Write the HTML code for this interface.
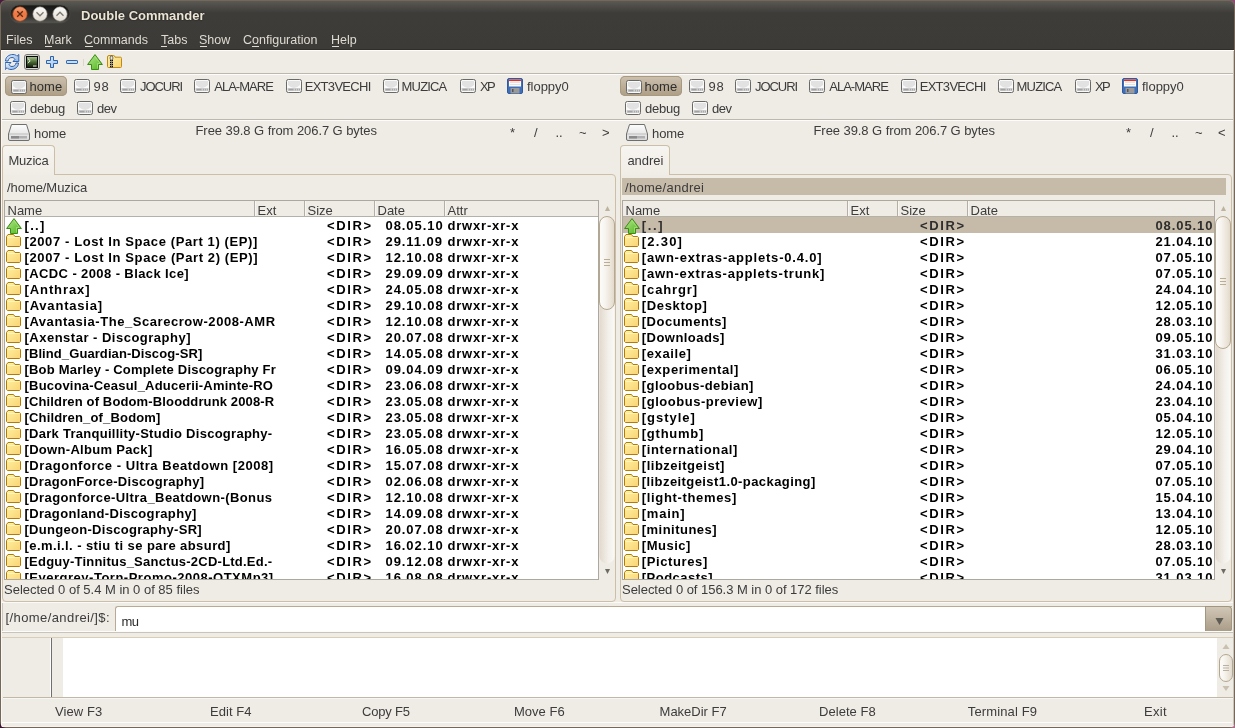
<!DOCTYPE html><html><head><meta charset="utf-8"><style>
html,body{margin:0;padding:0;}
body{width:1235px;height:728px;overflow:hidden;position:relative;background:#5b2b52;font-family:"Liberation Sans",sans-serif;color:#3C3C3C;}
.r{position:absolute;}
.t{position:absolute;white-space:pre;line-height:normal;}
.b{font-weight:bold;font-size:13px;letter-spacing:0.55px;}
</style></head><body>
<svg width="0" height="0" style="position:absolute">
<defs>
<linearGradient id="gDrive" x1="0" y1="0" x2="0" y2="1"><stop offset="0" stop-color="#fdfdfd"/><stop offset="1" stop-color="#d9d9d9"/></linearGradient>
<linearGradient id="gFold" x1="0" y1="0" x2="1" y2="1"><stop offset="0" stop-color="#fff0a2"/><stop offset="1" stop-color="#f9d474"/></linearGradient>
<linearGradient id="gArr" x1="0" y1="0" x2="1" y2="1"><stop offset="0" stop-color="#b6e896"/><stop offset="1" stop-color="#4cb414"/></linearGradient>
<linearGradient id="gTerm" x1="0" y1="0" x2="0" y2="1"><stop offset="0" stop-color="#a2c088"/><stop offset="0.5" stop-color="#4a6a34"/><stop offset="1" stop-color="#14200c"/></linearGradient>
<linearGradient id="gClose" x1="0" y1="0" x2="0" y2="1"><stop offset="0" stop-color="#f4a27a"/><stop offset="0.5" stop-color="#ee7640"/><stop offset="1" stop-color="#f0885a"/></linearGradient>
<linearGradient id="gThumb" x1="0" y1="0" x2="1" y2="0"><stop offset="0" stop-color="#fdfcfa"/><stop offset="0.35" stop-color="#f8f5f0"/><stop offset="1" stop-color="#e2d9cb"/></linearGradient>
<linearGradient id="gTrough" x1="0" y1="0" x2="1" y2="0"><stop offset="0" stop-color="#e2d9cc"/><stop offset="0.6" stop-color="#f3f0eb"/><stop offset="1" stop-color="#faf9f6"/></linearGradient>
<linearGradient id="gWb" x1="0" y1="0" x2="0" y2="1"><stop offset="0" stop-color="#fdfcfa"/><stop offset="1" stop-color="#e2dbd0"/></linearGradient>
<symbol id="drive" viewBox="0 0 16 14">
 <rect x="0.5" y="0.5" width="15" height="13" rx="1.8" fill="#fafafa" stroke="#696965"/>
 <path d="M2 2 H14 V6 Q11 9 8 9 Q5 9 2 6 Z" fill="#e2e2e2"/>
 <rect x="1.5" y="9" width="13" height="3" fill="#cfcfcf"/>
 <rect x="2.5" y="9.8" width="5" height="1.6" fill="#a2a2a2"/>
 <rect x="9" y="9.8" width="1" height="1.6" fill="#a8a8a8"/><rect x="11" y="9.8" width="1" height="1.6" fill="#a8a8a8"/><rect x="13" y="9.8" width="1" height="1.6" fill="#a8a8a8"/>
</symbol>
<symbol id="bigdrive" viewBox="0 0 22 17">
 <path d="M3.5 0.5 H18.5 L21.5 10 V15 Q21.5 16.5 20 16.5 H2 Q0.5 16.5 0.5 15 V10 Z" fill="url(#gDrive)" stroke="#6e6e6e"/>
 <path d="M1 10 H21" stroke="#bdbdbd" stroke-width="1"/>
 <rect x="3" y="12" width="16" height="2.5" fill="#b0b0b0"/>
 <rect x="3" y="12" width="8" height="2.5" fill="#8a8a8a"/>
</symbol>
<symbol id="floppy" viewBox="0 0 16 16">
 <rect x="0.5" y="0.5" width="15" height="15" rx="1.5" fill="#3f6fb8" stroke="#2f5aa0"/>
 <rect x="2" y="1.5" width="12" height="7" fill="#ffffff"/>
 <rect x="2" y="1.5" width="12" height="1.6" fill="#e0301e"/>
 <rect x="3" y="4.5" width="10" height="0.6" fill="#c8c8c8"/>
 <rect x="3" y="6.5" width="10" height="0.6" fill="#c8c8c8"/>
 <rect x="3.5" y="10" width="9" height="5.5" fill="#9a9a9a"/>
 <rect x="5" y="11" width="1.5" height="3" fill="#555"/>
</symbol>
<symbol id="folder" viewBox="0 0 15 13">
 <path d="M0.5 2.5 L2 0.5 H7.5 L9 2.5 H13.5 L14.5 3.5 V11.5 L13.5 12.5 H1.5 L0.5 11.5 Z" fill="url(#gFold)" stroke="#b37a06" stroke-linejoin="bevel"/>
 <path d="M1.5 3.5 H13.5" stroke="#fff9c8" stroke-width="1" opacity="0.8"/>
 <path d="M2.5 1.5 H7" stroke="#fffbb0" stroke-width="1" opacity="0.8"/>
</symbol>
<symbol id="uparr" viewBox="0 0 16 16">
 <path d="M8 0.6 L15.4 10.5 H11.5 V15.5 H4.5 V10.5 H0.6 Z" fill="url(#gArr)" stroke="#3b8c12" stroke-linejoin="round"/>
 <path d="M8 2.6 L13.2 9.5 H10.5 V14.5" fill="none" stroke="#c8f0a8" stroke-width="0.7" opacity="0.7"/>
</symbol>
</defs></svg><div id="w" style="position:absolute;left:0;top:0;width:1235px;height:728px;will-change:transform"><div class="r" style="left:0px;top:0px;width:8px;height:8px;background:#4a1a40;"></div>
<div class="r" style="left:1227px;top:0px;width:8px;height:8px;background:#8a4a72;"></div>
<div class="r" style="left:0px;top:720px;width:8px;height:8px;background:#3a1530;"></div>
<div class="r" style="left:1227px;top:720px;width:8px;height:8px;background:#a87088;"></div>
<div class="r" style="left:0px;top:0px;width:1235px;height:728px;background:#75685a;border-radius:6px 6px 6px 6px;"></div>
<div class="r" style="left:1px;top:1px;width:1233px;height:49px;background:linear-gradient(#5a5954,#3d3c38 12px,#3c3b37);border-radius:5px 5px 0 0;"></div>
<div class="r" style="left:1px;top:50px;width:1233px;height:677px;background:#EFEBE5;border-radius:0 0 2px 2px;"></div>
<div class="r" style="left:1px;top:49px;width:1233px;height:1px;background:#2f2e2b;"></div>
<div class="r" style="left:1px;top:50px;width:1233px;height:1px;background:#fdfcfa;"></div>
<div class="r" style="left:1px;top:51px;width:1px;height:674px;background:#faf8f4;"></div>
<div class="r" style="left:1233px;top:51px;width:1px;height:674px;background:#c9c5bd;"></div>
<svg class="r" style="left:9px;top:4px" width="62" height="20">
<defs><linearGradient id="gPill" x1="0" y1="0" x2="0" y2="1"><stop offset="0" stop-color="#161615"/><stop offset="0.6" stop-color="#2c2b28"/><stop offset="1" stop-color="#5a5954"/></linearGradient></defs><rect x="1" y="1" width="60" height="18" rx="9" fill="url(#gPill)" stroke="#4a4945" stroke-width="0.8"/>
<circle cx="11" cy="10" r="7.2" fill="url(#gClose)" stroke="#a84a20" stroke-width="0.6"/>
<path d="M8.2 7.2 L13.8 12.8 M13.8 7.2 L8.2 12.8" stroke="#5a2a14" stroke-width="1.3"/>
<circle cx="31" cy="10" r="7.2" fill="url(#gWb)" stroke="#8d8a84" stroke-width="0.6"/>
<path d="M27.5 8.3 L31 11.8 L34.5 8.3" fill="none" stroke="#7a7771" stroke-width="1.3"/>
<circle cx="51" cy="10" r="7.2" fill="url(#gWb)" stroke="#8d8a84" stroke-width="0.6"/>
<path d="M47.5 11.7 L51 8.2 L54.5 11.7" fill="none" stroke="#7a7771" stroke-width="1.3"/>
</svg>
<div class="t" style="top:8.23px;font-size:13px;font-weight:bold;color:#ECE5D5;left:81px;text-shadow:0 0 1.5px #1a1a18,0 0 1px #1a1a18;">Double Commander</div>
<div class="t" style="top:32.69px;font-size:12.5px;color:#DFDBD2;left:6px;">Files</div>
<div class="t" style="top:32.69px;font-size:12.5px;color:#DFDBD2;left:44px;">Mark</div>
<div class="r" style="left:44.5px;top:46px;width:7.5px;height:1px;background:#DFDBD2;"></div>
<div class="t" style="top:32.69px;font-size:12.5px;color:#DFDBD2;left:84px;">Commands</div>
<div class="r" style="left:85px;top:46px;width:8px;height:1px;background:#DFDBD2;"></div>
<div class="t" style="top:32.69px;font-size:12.5px;color:#DFDBD2;left:161px;">Tabs</div>
<div class="r" style="left:161px;top:46px;width:6px;height:1px;background:#DFDBD2;"></div>
<div class="t" style="top:32.69px;font-size:12.5px;color:#DFDBD2;left:199px;">Show</div>
<div class="r" style="left:200px;top:46px;width:7px;height:1px;background:#DFDBD2;"></div>
<div class="t" style="top:32.69px;font-size:12.5px;color:#DFDBD2;left:243px;">Configuration</div>
<div class="r" style="left:252px;top:46px;width:7px;height:1px;background:#DFDBD2;"></div>
<div class="t" style="top:32.69px;font-size:12.5px;color:#DFDBD2;left:331px;">Help</div>
<div class="r" style="left:332px;top:46px;width:7px;height:1px;background:#DFDBD2;"></div>
<svg class="r" style="left:5px;top:54px" width="15" height="16" viewBox="0 0 15 16">
<defs><linearGradient id="gRef" x1="0" y1="0" x2="1" y2="1"><stop offset="0" stop-color="#e8f1fb"/><stop offset="1" stop-color="#8db2e0"/></linearGradient></defs>
<path d="M0.5 7 C0.5 3 4 0.5 8 0.5 C10 0.5 11.5 1.5 12 2.2 L13.8 0.5 V7.5 H8 L10 5.3 C9.3 4.3 8.5 3.5 7 3.5 C4.5 3.5 3.5 5 3 7 Z" fill="url(#gRef)" stroke="#2a62b5" stroke-width="1"/>
<path d="M13.5 9 C13.5 13 10 15.5 6 15.5 C4 15.5 2.5 14.5 2 13.8 L0.2 15.5 V8.5 H6 L4 10.7 C4.7 11.7 5.5 12.5 7 12.5 C9.5 12.5 10.5 11 11 9 Z" fill="url(#gRef)" stroke="#2a62b5" stroke-width="1"/>
</svg>
<svg class="r" style="left:24px;top:54px" width="16" height="16" viewBox="0 0 16 16">
<rect x="0.5" y="0.5" width="15" height="15" rx="2.5" fill="#d6d6d2" stroke="#777773"/>
<rect x="2" y="2" width="12" height="12" fill="#060606"/>
<rect x="3" y="3" width="10" height="10" fill="url(#gTerm)"/>
<path d="M3.8 4.5 L6.2 6.7 L3.8 9" fill="none" stroke="#f0f4ea" stroke-width="1"/>
<rect x="9" y="11.5" width="3.5" height="1" fill="#f0f4ea"/>
</svg>
<svg class="r" style="left:46px;top:56px" width="12" height="12" viewBox="0 0 12 12">
<defs><linearGradient id="gPl" x1="0" y1="0" x2="1" y2="1"><stop offset="0" stop-color="#e0ecfa"/><stop offset="1" stop-color="#9fc0e8"/></linearGradient></defs>
<path d="M4.5 0.5 H7.5 V4.5 H11.5 V7.5 H7.5 V11.5 H4.5 V7.5 H0.5 V4.5 H4.5 Z" fill="url(#gPl)" stroke="#2d62ad" stroke-width="1" stroke-linejoin="round"/>
</svg>
<svg class="r" style="left:66px;top:60px" width="12" height="4" viewBox="0 0 12 4">
<rect x="0.5" y="0.5" width="11" height="3" rx="0.6" fill="#c9dcf3" stroke="#2d62ad" stroke-width="1"/>
</svg>
<div class="r" style="left:83px;top:59px;width:1px;height:7px;background:#dcd6cc;"></div>
<svg class="r" style="left:87px;top:54px" width="16" height="16"><use href="#uparr"/></svg>
<svg class="r" style="left:107px;top:55px" width="15" height="13" viewBox="0 0 15 13">
<path d="M0.5 2 Q0.5 0.5 2 0.5 H6.5 Q7.8 0.5 8 2.2 H13.5 Q14.5 2.2 14.5 3.5 V11.5 Q14.5 12.5 13.5 12.5 H1.5 Q0.5 12.5 0.5 11.5 Z" fill="url(#gFold)" stroke="#c08a10"/>
<rect x="3" y="5" width="3" height="1.3" fill="#0a0a0a"/><rect x="3" y="7" width="3" height="1.3" fill="#0a0a0a"/><rect x="3" y="9" width="3" height="1.3" fill="#0a0a0a"/><rect x="3" y="11" width="3" height="1.3" fill="#0a0a0a"/>
<rect x="4.1" y="4" width="0.8" height="8" fill="#999"/>
<rect x="3.2" y="1" width="2.6" height="4" rx="1.2" fill="#e8e8e8" stroke="#333" stroke-width="0.7"/>
</svg>
<div class="r" style="left:2px;top:73px;width:1231px;height:1px;background:#bcb8b0;"></div>
<div class="r" style="left:2px;top:74px;width:1231px;height:1px;background:#fdfcfa;"></div>
<div class="r" style="left:5px;top:76px;width:62px;height:20px;background:linear-gradient(#cdc1b0,#b9ab95 60%,#ad9e86);border-radius:5px;box-shadow:inset 0 0 0 1px #a8997f;"></div>
<svg class="r" style="left:11px;top:80px" width="16" height="14"><use href="#drive"/></svg>
<div class="t" style="top:79.23px;font-size:13px;color:#2e2e2e;letter-spacing:0.070px;left:29.50px;">home</div>
<svg class="r" style="left:74px;top:79px" width="16" height="14"><use href="#drive"/></svg>
<div class="t" style="top:79.23px;font-size:13px;letter-spacing:0.770px;left:93.50px;">98</div>
<svg class="r" style="left:120px;top:79px" width="16" height="14"><use href="#drive"/></svg>
<div class="t" style="top:79.23px;font-size:13px;letter-spacing:-1.055px;left:140.00px;">JOCURI</div>
<svg class="r" style="left:194px;top:79px" width="16" height="14"><use href="#drive"/></svg>
<div class="t" style="top:79.23px;font-size:13px;letter-spacing:-0.970px;left:214.20px;">ALA-MARE</div>
<svg class="r" style="left:286px;top:79px" width="16" height="14"><use href="#drive"/></svg>
<div class="t" style="top:79.23px;font-size:13px;letter-spacing:-0.704px;left:304.70px;">EXT3VECHI</div>
<svg class="r" style="left:383px;top:79px" width="16" height="14"><use href="#drive"/></svg>
<div class="t" style="top:79.23px;font-size:13px;letter-spacing:-0.832px;left:401.60px;">MUZICA</div>
<svg class="r" style="left:460px;top:79px" width="16" height="14"><use href="#drive"/></svg>
<div class="t" style="top:79.23px;font-size:13px;letter-spacing:-1.671px;left:480.00px;">XP</div>
<svg class="r" style="left:507px;top:78px" width="16" height="16"><use href="#floppy"/></svg>
<div class="t" style="top:79.23px;font-size:13px;letter-spacing:-0.032px;left:527.00px;">floppy0</div>
<svg class="r" style="left:10px;top:101px" width="16" height="14"><use href="#drive"/></svg>
<div class="t" style="top:100.73px;font-size:13px;letter-spacing:-0.230px;left:30.00px;">debug</div>
<svg class="r" style="left:77px;top:101px" width="16" height="14"><use href="#drive"/></svg>
<div class="t" style="top:100.73px;font-size:13px;letter-spacing:-0.480px;left:97.00px;">dev</div>
<div class="r" style="left:620px;top:76px;width:62px;height:20px;background:linear-gradient(#cdc1b0,#b9ab95 60%,#ad9e86);border-radius:5px;box-shadow:inset 0 0 0 1px #a8997f;"></div>
<svg class="r" style="left:626px;top:80px" width="16" height="14"><use href="#drive"/></svg>
<div class="t" style="top:79.23px;font-size:13px;color:#2e2e2e;letter-spacing:0.070px;left:644.50px;">home</div>
<svg class="r" style="left:689px;top:79px" width="16" height="14"><use href="#drive"/></svg>
<div class="t" style="top:79.23px;font-size:13px;letter-spacing:0.770px;left:708.50px;">98</div>
<svg class="r" style="left:735px;top:79px" width="16" height="14"><use href="#drive"/></svg>
<div class="t" style="top:79.23px;font-size:13px;letter-spacing:-1.055px;left:755.00px;">JOCURI</div>
<svg class="r" style="left:809px;top:79px" width="16" height="14"><use href="#drive"/></svg>
<div class="t" style="top:79.23px;font-size:13px;letter-spacing:-0.970px;left:829.20px;">ALA-MARE</div>
<svg class="r" style="left:901px;top:79px" width="16" height="14"><use href="#drive"/></svg>
<div class="t" style="top:79.23px;font-size:13px;letter-spacing:-0.704px;left:919.70px;">EXT3VECHI</div>
<svg class="r" style="left:998px;top:79px" width="16" height="14"><use href="#drive"/></svg>
<div class="t" style="top:79.23px;font-size:13px;letter-spacing:-0.832px;left:1016.60px;">MUZICA</div>
<svg class="r" style="left:1075px;top:79px" width="16" height="14"><use href="#drive"/></svg>
<div class="t" style="top:79.23px;font-size:13px;letter-spacing:-1.671px;left:1095.00px;">XP</div>
<svg class="r" style="left:1122px;top:78px" width="16" height="16"><use href="#floppy"/></svg>
<div class="t" style="top:79.23px;font-size:13px;letter-spacing:-0.032px;left:1142.00px;">floppy0</div>
<svg class="r" style="left:625px;top:101px" width="16" height="14"><use href="#drive"/></svg>
<div class="t" style="top:100.73px;font-size:13px;letter-spacing:-0.230px;left:645.00px;">debug</div>
<svg class="r" style="left:692px;top:101px" width="16" height="14"><use href="#drive"/></svg>
<div class="t" style="top:100.73px;font-size:13px;letter-spacing:-0.480px;left:712.00px;">dev</div>
<div class="r" style="left:2px;top:119px;width:1231px;height:1px;background:#bcb8b0;"></div>
<div class="r" style="left:2px;top:120px;width:1231px;height:1px;background:#fdfcfa;"></div>
<svg class="r" style="left:8px;top:124px" width="22" height="17"><use href="#bigdrive"/></svg>
<div class="t" style="top:125.73px;font-size:13px;letter-spacing:-0.096px;left:34.00px;">home</div>
<div class="t" style="top:123.23px;font-size:13px;letter-spacing:-0.070px;left:195.50px;">Free 39.8 G from 206.7 G bytes</div>
<div class="r" style="left:2px;top:145px;width:53px;height:30px;background:linear-gradient(#f7f5f1,#f0ece6);border:1px solid #cdbfa7;border-bottom:none;border-radius:4px 4px 0 0;box-sizing:border-box;"></div>
<div class="t" style="top:153.23px;font-size:13px;letter-spacing:-0.189px;left:8.40px;">Muzica</div>
<div class="r" style="left:2px;top:174px;width:614px;height:428px;border:1px solid #cdbfa7;border-radius:0 4px 4px 4px;box-sizing:border-box;"></div>
<div class="r" style="left:3px;top:174px;width:51px;height:1px;background:#f0ece6;"></div>
<div class="t" style="top:180.23px;font-size:13px;letter-spacing:-0.063px;left:7.00px;">/home/Muzica</div>
<div class="r" style="left:4px;top:200px;width:595px;height:380px;background:#fff;border:1px solid #aca79f;box-sizing:border-box;"></div>
<div class="r" style="left:5px;top:201px;width:593px;height:15px;background:#EFEBE5;"></div>
<div class="r" style="left:5px;top:216px;width:593px;height:1px;background:#b5b0a8;"></div>
<div class="r" style="left:254px;top:201px;width:1px;height:15px;background:#b3aea6;"></div>
<div class="r" style="left:255px;top:201px;width:1px;height:15px;background:#f8f6f2;"></div>
<div class="r" style="left:304px;top:201px;width:1px;height:15px;background:#b3aea6;"></div>
<div class="r" style="left:305px;top:201px;width:1px;height:15px;background:#f8f6f2;"></div>
<div class="r" style="left:374px;top:201px;width:1px;height:15px;background:#b3aea6;"></div>
<div class="r" style="left:375px;top:201px;width:1px;height:15px;background:#f8f6f2;"></div>
<div class="r" style="left:444px;top:201px;width:1px;height:15px;background:#b3aea6;"></div>
<div class="r" style="left:445px;top:201px;width:1px;height:15px;background:#f8f6f2;"></div>
<div class="t" style="top:203.23px;font-size:13px;left:7.5px;">Name</div>
<div class="t" style="top:203.23px;font-size:13px;left:257.5px;">Ext</div>
<div class="t" style="top:203.23px;font-size:13px;left:307.5px;">Size</div>
<div class="t" style="top:203.23px;font-size:13px;left:377.5px;">Date</div>
<div class="t" style="top:203.23px;font-size:13px;left:447.5px;">Attr</div>
<div class="r" style="left:5px;top:217px;width:593px;height:362px;overflow:hidden;">
<svg class="r" style="left:1px;top:1px" width="16" height="16"><use href="#uparr"/></svg>
<div class="t" style="top:1.23px;font-size:13px;font-weight:bold;color:#000;letter-spacing:1.316px;left:19.50px;">[..]</div>
<div class="t b" style="left:322px;top:1.23px;color:#000;letter-spacing:1.6px">&lt;DIR&gt;</div>
<div class="t b" style="left:380.5px;top:1.23px;color:#000;letter-spacing:0.93px">08.05.10</div>
<div class="t b" style="left:442.5px;top:1.23px;color:#000;letter-spacing:0.81px">drwxr-xr-x</div>
<svg class="r" style="left:1px;top:17px" width="15" height="13"><use href="#folder"/></svg>
<div class="t" style="top:17.23px;font-size:13px;font-weight:bold;color:#000;letter-spacing:0.605px;left:19.50px;">[2007 - Lost In Space (Part 1) (EP)]</div>
<div class="t b" style="left:322px;top:17.23px;color:#000;letter-spacing:1.6px">&lt;DIR&gt;</div>
<div class="t b" style="left:380.5px;top:17.23px;color:#000;letter-spacing:0.93px">29.11.09</div>
<div class="t b" style="left:442.5px;top:17.23px;color:#000;letter-spacing:0.81px">drwxr-xr-x</div>
<svg class="r" style="left:1px;top:33px" width="15" height="13"><use href="#folder"/></svg>
<div class="t" style="top:33.23px;font-size:13px;font-weight:bold;color:#000;letter-spacing:0.613px;left:19.50px;">[2007 - Lost In Space (Part 2) (EP)]</div>
<div class="t b" style="left:322px;top:33.23px;color:#000;letter-spacing:1.6px">&lt;DIR&gt;</div>
<div class="t b" style="left:380.5px;top:33.23px;color:#000;letter-spacing:0.93px">12.10.08</div>
<div class="t b" style="left:442.5px;top:33.23px;color:#000;letter-spacing:0.81px">drwxr-xr-x</div>
<svg class="r" style="left:1px;top:49px" width="15" height="13"><use href="#folder"/></svg>
<div class="t" style="top:49.23px;font-size:13px;font-weight:bold;color:#000;letter-spacing:0.397px;left:19.50px;">[ACDC - 2008 - Black Ice]</div>
<div class="t b" style="left:322px;top:49.23px;color:#000;letter-spacing:1.6px">&lt;DIR&gt;</div>
<div class="t b" style="left:380.5px;top:49.23px;color:#000;letter-spacing:0.93px">29.09.09</div>
<div class="t b" style="left:442.5px;top:49.23px;color:#000;letter-spacing:0.81px">drwxr-xr-x</div>
<svg class="r" style="left:1px;top:65px" width="15" height="13"><use href="#folder"/></svg>
<div class="t" style="top:65.23px;font-size:13px;font-weight:bold;color:#000;letter-spacing:0.907px;left:19.50px;">[Anthrax]</div>
<div class="t b" style="left:322px;top:65.23px;color:#000;letter-spacing:1.6px">&lt;DIR&gt;</div>
<div class="t b" style="left:380.5px;top:65.23px;color:#000;letter-spacing:0.93px">24.05.08</div>
<div class="t b" style="left:442.5px;top:65.23px;color:#000;letter-spacing:0.81px">drwxr-xr-x</div>
<svg class="r" style="left:1px;top:81px" width="15" height="13"><use href="#folder"/></svg>
<div class="t" style="top:81.23px;font-size:13px;font-weight:bold;color:#000;letter-spacing:0.803px;left:19.50px;">[Avantasia]</div>
<div class="t b" style="left:322px;top:81.23px;color:#000;letter-spacing:1.6px">&lt;DIR&gt;</div>
<div class="t b" style="left:380.5px;top:81.23px;color:#000;letter-spacing:0.93px">29.10.08</div>
<div class="t b" style="left:442.5px;top:81.23px;color:#000;letter-spacing:0.81px">drwxr-xr-x</div>
<svg class="r" style="left:1px;top:97px" width="15" height="13"><use href="#folder"/></svg>
<div class="t" style="top:97.23px;font-size:13px;font-weight:bold;color:#000;letter-spacing:0.553px;left:19.50px;">[Avantasia-The_Scarecrow-2008-AMR</div>
<div class="t b" style="left:322px;top:97.23px;color:#000;letter-spacing:1.6px">&lt;DIR&gt;</div>
<div class="t b" style="left:380.5px;top:97.23px;color:#000;letter-spacing:0.93px">12.10.08</div>
<div class="t b" style="left:442.5px;top:97.23px;color:#000;letter-spacing:0.81px">drwxr-xr-x</div>
<svg class="r" style="left:1px;top:113px" width="15" height="13"><use href="#folder"/></svg>
<div class="t" style="top:113.23px;font-size:13px;font-weight:bold;color:#000;letter-spacing:0.497px;left:19.50px;">[Axenstar - Discography]</div>
<div class="t b" style="left:322px;top:113.23px;color:#000;letter-spacing:1.6px">&lt;DIR&gt;</div>
<div class="t b" style="left:380.5px;top:113.23px;color:#000;letter-spacing:0.93px">20.07.08</div>
<div class="t b" style="left:442.5px;top:113.23px;color:#000;letter-spacing:0.81px">drwxr-xr-x</div>
<svg class="r" style="left:1px;top:129px" width="15" height="13"><use href="#folder"/></svg>
<div class="t" style="top:129.23px;font-size:13px;font-weight:bold;color:#000;letter-spacing:0.089px;left:19.50px;">[Blind_Guardian-Discog-SR]</div>
<div class="t b" style="left:322px;top:129.23px;color:#000;letter-spacing:1.6px">&lt;DIR&gt;</div>
<div class="t b" style="left:380.5px;top:129.23px;color:#000;letter-spacing:0.93px">14.05.08</div>
<div class="t b" style="left:442.5px;top:129.23px;color:#000;letter-spacing:0.81px">drwxr-xr-x</div>
<svg class="r" style="left:1px;top:145px" width="15" height="13"><use href="#folder"/></svg>
<div class="t" style="top:145.23px;font-size:13px;font-weight:bold;color:#000;letter-spacing:0.197px;left:19.50px;">[Bob Marley - Complete Discography Fr</div>
<div class="t b" style="left:322px;top:145.23px;color:#000;letter-spacing:1.6px">&lt;DIR&gt;</div>
<div class="t b" style="left:380.5px;top:145.23px;color:#000;letter-spacing:0.93px">09.04.09</div>
<div class="t b" style="left:442.5px;top:145.23px;color:#000;letter-spacing:0.81px">drwxr-xr-x</div>
<svg class="r" style="left:1px;top:161px" width="15" height="13"><use href="#folder"/></svg>
<div class="t" style="top:161.23px;font-size:13px;font-weight:bold;color:#000;letter-spacing:0.210px;left:19.50px;">[Bucovina-Ceasul_Aducerii-Aminte-RO</div>
<div class="t b" style="left:322px;top:161.23px;color:#000;letter-spacing:1.6px">&lt;DIR&gt;</div>
<div class="t b" style="left:380.5px;top:161.23px;color:#000;letter-spacing:0.93px">23.06.08</div>
<div class="t b" style="left:442.5px;top:161.23px;color:#000;letter-spacing:0.81px">drwxr-xr-x</div>
<svg class="r" style="left:1px;top:177px" width="15" height="13"><use href="#folder"/></svg>
<div class="t" style="top:177.23px;font-size:13px;font-weight:bold;color:#000;letter-spacing:0.139px;left:19.50px;">[Children of Bodom-Blooddrunk 2008-R</div>
<div class="t b" style="left:322px;top:177.23px;color:#000;letter-spacing:1.6px">&lt;DIR&gt;</div>
<div class="t b" style="left:380.5px;top:177.23px;color:#000;letter-spacing:0.93px">23.05.08</div>
<div class="t b" style="left:442.5px;top:177.23px;color:#000;letter-spacing:0.81px">drwxr-xr-x</div>
<svg class="r" style="left:1px;top:193px" width="15" height="13"><use href="#folder"/></svg>
<div class="t" style="top:193.23px;font-size:13px;font-weight:bold;color:#000;letter-spacing:0.169px;left:19.50px;">[Children_of_Bodom]</div>
<div class="t b" style="left:322px;top:193.23px;color:#000;letter-spacing:1.6px">&lt;DIR&gt;</div>
<div class="t b" style="left:380.5px;top:193.23px;color:#000;letter-spacing:0.93px">23.05.08</div>
<div class="t b" style="left:442.5px;top:193.23px;color:#000;letter-spacing:0.81px">drwxr-xr-x</div>
<svg class="r" style="left:1px;top:209px" width="15" height="13"><use href="#folder"/></svg>
<div class="t" style="top:209.23px;font-size:13px;font-weight:bold;color:#000;letter-spacing:0.270px;left:19.50px;">[Dark Tranquillity-Studio Discography-</div>
<div class="t b" style="left:322px;top:209.23px;color:#000;letter-spacing:1.6px">&lt;DIR&gt;</div>
<div class="t b" style="left:380.5px;top:209.23px;color:#000;letter-spacing:0.93px">23.05.08</div>
<div class="t b" style="left:442.5px;top:209.23px;color:#000;letter-spacing:0.81px">drwxr-xr-x</div>
<svg class="r" style="left:1px;top:225px" width="15" height="13"><use href="#folder"/></svg>
<div class="t" style="top:225.23px;font-size:13px;font-weight:bold;color:#000;letter-spacing:0.309px;left:19.50px;">[Down-Album Pack]</div>
<div class="t b" style="left:322px;top:225.23px;color:#000;letter-spacing:1.6px">&lt;DIR&gt;</div>
<div class="t b" style="left:380.5px;top:225.23px;color:#000;letter-spacing:0.93px">16.05.08</div>
<div class="t b" style="left:442.5px;top:225.23px;color:#000;letter-spacing:0.81px">drwxr-xr-x</div>
<svg class="r" style="left:1px;top:241px" width="15" height="13"><use href="#folder"/></svg>
<div class="t" style="top:241.23px;font-size:13px;font-weight:bold;color:#000;letter-spacing:0.541px;left:19.50px;">[Dragonforce - Ultra Beatdown [2008]</div>
<div class="t b" style="left:322px;top:241.23px;color:#000;letter-spacing:1.6px">&lt;DIR&gt;</div>
<div class="t b" style="left:380.5px;top:241.23px;color:#000;letter-spacing:0.93px">15.07.08</div>
<div class="t b" style="left:442.5px;top:241.23px;color:#000;letter-spacing:0.81px">drwxr-xr-x</div>
<svg class="r" style="left:1px;top:257px" width="15" height="13"><use href="#folder"/></svg>
<div class="t" style="top:257.23px;font-size:13px;font-weight:bold;color:#000;letter-spacing:0.292px;left:19.50px;">[DragonForce-Discography]</div>
<div class="t b" style="left:322px;top:257.23px;color:#000;letter-spacing:1.6px">&lt;DIR&gt;</div>
<div class="t b" style="left:380.5px;top:257.23px;color:#000;letter-spacing:0.93px">02.06.08</div>
<div class="t b" style="left:442.5px;top:257.23px;color:#000;letter-spacing:0.81px">drwxr-xr-x</div>
<svg class="r" style="left:1px;top:273px" width="15" height="13"><use href="#folder"/></svg>
<div class="t" style="top:273.23px;font-size:13px;font-weight:bold;color:#000;letter-spacing:0.410px;left:19.50px;">[Dragonforce-Ultra_Beatdown-(Bonus</div>
<div class="t b" style="left:322px;top:273.23px;color:#000;letter-spacing:1.6px">&lt;DIR&gt;</div>
<div class="t b" style="left:380.5px;top:273.23px;color:#000;letter-spacing:0.93px">12.10.08</div>
<div class="t b" style="left:442.5px;top:273.23px;color:#000;letter-spacing:0.81px">drwxr-xr-x</div>
<svg class="r" style="left:1px;top:289px" width="15" height="13"><use href="#folder"/></svg>
<div class="t" style="top:289.23px;font-size:13px;font-weight:bold;color:#000;letter-spacing:0.342px;left:19.50px;">[Dragonland-Discography]</div>
<div class="t b" style="left:322px;top:289.23px;color:#000;letter-spacing:1.6px">&lt;DIR&gt;</div>
<div class="t b" style="left:380.5px;top:289.23px;color:#000;letter-spacing:0.93px">14.09.08</div>
<div class="t b" style="left:442.5px;top:289.23px;color:#000;letter-spacing:0.81px">drwxr-xr-x</div>
<svg class="r" style="left:1px;top:305px" width="15" height="13"><use href="#folder"/></svg>
<div class="t" style="top:305.23px;font-size:13px;font-weight:bold;color:#000;letter-spacing:0.291px;left:19.50px;">[Dungeon-Discography-SR]</div>
<div class="t b" style="left:322px;top:305.23px;color:#000;letter-spacing:1.6px">&lt;DIR&gt;</div>
<div class="t b" style="left:380.5px;top:305.23px;color:#000;letter-spacing:0.93px">20.07.08</div>
<div class="t b" style="left:442.5px;top:305.23px;color:#000;letter-spacing:0.81px">drwxr-xr-x</div>
<svg class="r" style="left:1px;top:321px" width="15" height="13"><use href="#folder"/></svg>
<div class="t" style="top:321.23px;font-size:13px;font-weight:bold;color:#000;letter-spacing:0.423px;left:19.50px;">[e.m.i.l. - stiu ti se pare absurd]</div>
<div class="t b" style="left:322px;top:321.23px;color:#000;letter-spacing:1.6px">&lt;DIR&gt;</div>
<div class="t b" style="left:380.5px;top:321.23px;color:#000;letter-spacing:0.93px">16.02.10</div>
<div class="t b" style="left:442.5px;top:321.23px;color:#000;letter-spacing:0.81px">drwxr-xr-x</div>
<svg class="r" style="left:1px;top:337px" width="15" height="13"><use href="#folder"/></svg>
<div class="t" style="top:337.23px;font-size:13px;font-weight:bold;color:#000;letter-spacing:0.231px;left:19.50px;">[Edguy-Tinnitus_Sanctus-2CD-Ltd.Ed.-</div>
<div class="t b" style="left:322px;top:337.23px;color:#000;letter-spacing:1.6px">&lt;DIR&gt;</div>
<div class="t b" style="left:380.5px;top:337.23px;color:#000;letter-spacing:0.93px">09.12.08</div>
<div class="t b" style="left:442.5px;top:337.23px;color:#000;letter-spacing:0.81px">drwxr-xr-x</div>
<svg class="r" style="left:1px;top:353px" width="15" height="13"><use href="#folder"/></svg>
<div class="t" style="top:353.23px;font-size:13px;font-weight:bold;color:#000;letter-spacing:0.509px;left:19.50px;">[Evergrey-Torn-Promo-2008-OTXMp3]</div>
<div class="t b" style="left:322px;top:353.23px;color:#000;letter-spacing:1.6px">&lt;DIR&gt;</div>
<div class="t b" style="left:380.5px;top:353.23px;color:#000;letter-spacing:0.93px">16.08.08</div>
<div class="t b" style="left:442.5px;top:353.23px;color:#000;letter-spacing:0.81px">drwxr-xr-x</div>
</div>
<svg class="r" style="left:599px;top:200px" width="16" height="380"><path d="M6 11 L8.5 6 L11 11 Z" fill="#bdb39e"/><path d="M6 369 L8.5 374 L11 369 Z" fill="#6e6a64"/><rect x="0.5" y="16.5" width="15" height="347" rx="7.5" fill="url(#gTrough)"/><rect x="0.5" y="16.5" width="15" height="93" rx="7.5" fill="url(#gThumb)" stroke="#b5a88f"/><path d="M5 59.5 H11 M5 62.5 H11 M5 65.5 H11" stroke="#b9ad96" stroke-width="1"/></svg>
<div class="t" style="top:582.23px;font-size:13px;letter-spacing:-0.010px;left:4.00px;">Selected 0 of 5.4 M in 0 of 85 files</div>
<svg class="r" style="left:626px;top:124px" width="22" height="17"><use href="#bigdrive"/></svg>
<div class="t" style="top:125.73px;font-size:13px;letter-spacing:-0.096px;left:652.00px;">home</div>
<div class="t" style="top:123.23px;font-size:13px;letter-spacing:-0.070px;left:813.50px;">Free 39.8 G from 206.7 G bytes</div>
<div class="r" style="left:620px;top:145px;width:50px;height:30px;background:linear-gradient(#f7f5f1,#f0ece6);border:1px solid #cdbfa7;border-bottom:none;border-radius:4px 4px 0 0;box-sizing:border-box;"></div>
<div class="t" style="top:153.23px;font-size:13px;letter-spacing:-0.050px;left:627.40px;">andrei</div>
<div class="r" style="left:620px;top:174px;width:612px;height:428px;border:1px solid #cdbfa7;border-radius:0 4px 4px 4px;box-sizing:border-box;"></div>
<div class="r" style="left:621px;top:174px;width:48px;height:1px;background:#f0ece6;"></div>
<div class="r" style="left:622px;top:178px;width:604px;height:17px;background:#c6baa8;"></div>
<div class="t" style="top:180.23px;font-size:13px;letter-spacing:0.273px;left:625.00px;">/home/andrei</div>
<div class="r" style="left:622px;top:200px;width:593px;height:380px;background:#fff;border:1px solid #aca79f;box-sizing:border-box;"></div>
<div class="r" style="left:623px;top:201px;width:591px;height:15px;background:#EFEBE5;"></div>
<div class="r" style="left:623px;top:216px;width:591px;height:1px;background:#b5b0a8;"></div>
<div class="r" style="left:847px;top:201px;width:1px;height:15px;background:#b3aea6;"></div>
<div class="r" style="left:848px;top:201px;width:1px;height:15px;background:#f8f6f2;"></div>
<div class="r" style="left:897px;top:201px;width:1px;height:15px;background:#b3aea6;"></div>
<div class="r" style="left:898px;top:201px;width:1px;height:15px;background:#f8f6f2;"></div>
<div class="r" style="left:967px;top:201px;width:1px;height:15px;background:#b3aea6;"></div>
<div class="r" style="left:968px;top:201px;width:1px;height:15px;background:#f8f6f2;"></div>
<div class="t" style="top:203.23px;font-size:13px;left:625.5px;">Name</div>
<div class="t" style="top:203.23px;font-size:13px;left:850.5px;">Ext</div>
<div class="t" style="top:203.23px;font-size:13px;left:900.5px;">Size</div>
<div class="t" style="top:203.23px;font-size:13px;left:970.5px;">Date</div>
<div class="r" style="left:623px;top:217px;width:591px;height:362px;overflow:hidden;">
<div class="r" style="left:0;top:0px;width:591px;height:16px;background:#c6baa8;"></div>
<svg class="r" style="left:1px;top:1px" width="16" height="16"><use href="#uparr"/></svg>
<div class="t" style="top:1.23px;font-size:13px;font-weight:bold;color:#2e2e2e;letter-spacing:1.616px;left:18.80px;">[..]</div>
<div class="t b" style="left:297px;top:1.23px;color:#2e2e2e;letter-spacing:1.6px">&lt;DIR&gt;</div>
<div class="t b" style="left:0;width:590.43px;text-align:right;top:1.23px;color:#2e2e2e;letter-spacing:0.93px">08.05.10</div>
<svg class="r" style="left:1px;top:17px" width="15" height="13"><use href="#folder"/></svg>
<div class="t" style="top:17.23px;font-size:13px;font-weight:bold;color:#000;letter-spacing:1.234px;left:18.80px;">[2.30]</div>
<div class="t b" style="left:297px;top:17.23px;color:#000;letter-spacing:1.6px">&lt;DIR&gt;</div>
<div class="t b" style="left:0;width:590.43px;text-align:right;top:17.23px;color:#000;letter-spacing:0.93px">21.04.10</div>
<svg class="r" style="left:1px;top:33px" width="15" height="13"><use href="#folder"/></svg>
<div class="t" style="top:33.23px;font-size:13px;font-weight:bold;color:#000;letter-spacing:0.803px;left:18.80px;">[awn-extras-applets-0.4.0]</div>
<div class="t b" style="left:297px;top:33.23px;color:#000;letter-spacing:1.6px">&lt;DIR&gt;</div>
<div class="t b" style="left:0;width:590.43px;text-align:right;top:33.23px;color:#000;letter-spacing:0.93px">07.05.10</div>
<svg class="r" style="left:1px;top:49px" width="15" height="13"><use href="#folder"/></svg>
<div class="t" style="top:49.23px;font-size:13px;font-weight:bold;color:#000;letter-spacing:0.775px;left:18.80px;">[awn-extras-applets-trunk]</div>
<div class="t b" style="left:297px;top:49.23px;color:#000;letter-spacing:1.6px">&lt;DIR&gt;</div>
<div class="t b" style="left:0;width:590.43px;text-align:right;top:49.23px;color:#000;letter-spacing:0.93px">07.05.10</div>
<svg class="r" style="left:1px;top:65px" width="15" height="13"><use href="#folder"/></svg>
<div class="t" style="top:65.23px;font-size:13px;font-weight:bold;color:#000;letter-spacing:0.887px;left:18.80px;">[cahrgr]</div>
<div class="t b" style="left:297px;top:65.23px;color:#000;letter-spacing:1.6px">&lt;DIR&gt;</div>
<div class="t b" style="left:0;width:590.43px;text-align:right;top:65.23px;color:#000;letter-spacing:0.93px">24.04.10</div>
<svg class="r" style="left:1px;top:81px" width="15" height="13"><use href="#folder"/></svg>
<div class="t" style="top:81.23px;font-size:13px;font-weight:bold;color:#000;letter-spacing:0.635px;left:18.80px;">[Desktop]</div>
<div class="t b" style="left:297px;top:81.23px;color:#000;letter-spacing:1.6px">&lt;DIR&gt;</div>
<div class="t b" style="left:0;width:590.43px;text-align:right;top:81.23px;color:#000;letter-spacing:0.93px">12.05.10</div>
<svg class="r" style="left:1px;top:97px" width="15" height="13"><use href="#folder"/></svg>
<div class="t" style="top:97.23px;font-size:13px;font-weight:bold;color:#000;letter-spacing:0.498px;left:18.80px;">[Documents]</div>
<div class="t b" style="left:297px;top:97.23px;color:#000;letter-spacing:1.6px">&lt;DIR&gt;</div>
<div class="t b" style="left:0;width:590.43px;text-align:right;top:97.23px;color:#000;letter-spacing:0.93px">28.03.10</div>
<svg class="r" style="left:1px;top:113px" width="15" height="13"><use href="#folder"/></svg>
<div class="t" style="top:113.23px;font-size:13px;font-weight:bold;color:#000;letter-spacing:0.454px;left:18.80px;">[Downloads]</div>
<div class="t b" style="left:297px;top:113.23px;color:#000;letter-spacing:1.6px">&lt;DIR&gt;</div>
<div class="t b" style="left:0;width:590.43px;text-align:right;top:113.23px;color:#000;letter-spacing:0.93px">09.05.10</div>
<svg class="r" style="left:1px;top:129px" width="15" height="13"><use href="#folder"/></svg>
<div class="t" style="top:129.23px;font-size:13px;font-weight:bold;color:#000;letter-spacing:0.618px;left:18.80px;">[exaile]</div>
<div class="t b" style="left:297px;top:129.23px;color:#000;letter-spacing:1.6px">&lt;DIR&gt;</div>
<div class="t b" style="left:0;width:590.43px;text-align:right;top:129.23px;color:#000;letter-spacing:0.93px">31.03.10</div>
<svg class="r" style="left:1px;top:145px" width="15" height="13"><use href="#folder"/></svg>
<div class="t" style="top:145.23px;font-size:13px;font-weight:bold;color:#000;letter-spacing:0.590px;left:18.80px;">[experimental]</div>
<div class="t b" style="left:297px;top:145.23px;color:#000;letter-spacing:1.6px">&lt;DIR&gt;</div>
<div class="t b" style="left:0;width:590.43px;text-align:right;top:145.23px;color:#000;letter-spacing:0.93px">06.05.10</div>
<svg class="r" style="left:1px;top:161px" width="15" height="13"><use href="#folder"/></svg>
<div class="t" style="top:161.23px;font-size:13px;font-weight:bold;color:#000;letter-spacing:0.413px;left:18.80px;">[gloobus-debian]</div>
<div class="t b" style="left:297px;top:161.23px;color:#000;letter-spacing:1.6px">&lt;DIR&gt;</div>
<div class="t b" style="left:0;width:590.43px;text-align:right;top:161.23px;color:#000;letter-spacing:0.93px">24.04.10</div>
<svg class="r" style="left:1px;top:177px" width="15" height="13"><use href="#folder"/></svg>
<div class="t" style="top:177.23px;font-size:13px;font-weight:bold;color:#000;letter-spacing:0.530px;left:18.80px;">[gloobus-preview]</div>
<div class="t b" style="left:297px;top:177.23px;color:#000;letter-spacing:1.6px">&lt;DIR&gt;</div>
<div class="t b" style="left:0;width:590.43px;text-align:right;top:177.23px;color:#000;letter-spacing:0.93px">23.04.10</div>
<svg class="r" style="left:1px;top:193px" width="15" height="13"><use href="#folder"/></svg>
<div class="t" style="top:193.23px;font-size:13px;font-weight:bold;color:#000;letter-spacing:0.971px;left:18.80px;">[gstyle]</div>
<div class="t b" style="left:297px;top:193.23px;color:#000;letter-spacing:1.6px">&lt;DIR&gt;</div>
<div class="t b" style="left:0;width:590.43px;text-align:right;top:193.23px;color:#000;letter-spacing:0.93px">05.04.10</div>
<svg class="r" style="left:1px;top:209px" width="15" height="13"><use href="#folder"/></svg>
<div class="t" style="top:209.23px;font-size:13px;font-weight:bold;color:#000;letter-spacing:0.746px;left:18.80px;">[gthumb]</div>
<div class="t b" style="left:297px;top:209.23px;color:#000;letter-spacing:1.6px">&lt;DIR&gt;</div>
<div class="t b" style="left:0;width:590.43px;text-align:right;top:209.23px;color:#000;letter-spacing:0.93px">12.05.10</div>
<svg class="r" style="left:1px;top:225px" width="15" height="13"><use href="#folder"/></svg>
<div class="t" style="top:225.23px;font-size:13px;font-weight:bold;color:#000;letter-spacing:0.633px;left:18.80px;">[international]</div>
<div class="t b" style="left:297px;top:225.23px;color:#000;letter-spacing:1.6px">&lt;DIR&gt;</div>
<div class="t b" style="left:0;width:590.43px;text-align:right;top:225.23px;color:#000;letter-spacing:0.93px">29.04.10</div>
<svg class="r" style="left:1px;top:241px" width="15" height="13"><use href="#folder"/></svg>
<div class="t" style="top:241.23px;font-size:13px;font-weight:bold;color:#000;letter-spacing:0.515px;left:18.80px;">[libzeitgeist]</div>
<div class="t b" style="left:297px;top:241.23px;color:#000;letter-spacing:1.6px">&lt;DIR&gt;</div>
<div class="t b" style="left:0;width:590.43px;text-align:right;top:241.23px;color:#000;letter-spacing:0.93px">07.05.10</div>
<svg class="r" style="left:1px;top:257px" width="15" height="13"><use href="#folder"/></svg>
<div class="t" style="top:257.23px;font-size:13px;font-weight:bold;color:#000;letter-spacing:0.419px;left:18.80px;">[libzeitgeist1.0-packaging]</div>
<div class="t b" style="left:297px;top:257.23px;color:#000;letter-spacing:1.6px">&lt;DIR&gt;</div>
<div class="t b" style="left:0;width:590.43px;text-align:right;top:257.23px;color:#000;letter-spacing:0.93px">07.05.10</div>
<svg class="r" style="left:1px;top:273px" width="15" height="13"><use href="#folder"/></svg>
<div class="t" style="top:273.23px;font-size:13px;font-weight:bold;color:#000;letter-spacing:0.661px;left:18.80px;">[light-themes]</div>
<div class="t b" style="left:297px;top:273.23px;color:#000;letter-spacing:1.6px">&lt;DIR&gt;</div>
<div class="t b" style="left:0;width:590.43px;text-align:right;top:273.23px;color:#000;letter-spacing:0.93px">15.04.10</div>
<svg class="r" style="left:1px;top:289px" width="15" height="13"><use href="#folder"/></svg>
<div class="t" style="top:289.23px;font-size:13px;font-weight:bold;color:#000;letter-spacing:0.746px;left:18.80px;">[main]</div>
<div class="t b" style="left:297px;top:289.23px;color:#000;letter-spacing:1.6px">&lt;DIR&gt;</div>
<div class="t b" style="left:0;width:590.43px;text-align:right;top:289.23px;color:#000;letter-spacing:0.93px">13.04.10</div>
<svg class="r" style="left:1px;top:305px" width="15" height="13"><use href="#folder"/></svg>
<div class="t" style="top:305.23px;font-size:13px;font-weight:bold;color:#000;letter-spacing:0.468px;left:18.80px;">[minitunes]</div>
<div class="t b" style="left:297px;top:305.23px;color:#000;letter-spacing:1.6px">&lt;DIR&gt;</div>
<div class="t b" style="left:0;width:590.43px;text-align:right;top:305.23px;color:#000;letter-spacing:0.93px">12.05.10</div>
<svg class="r" style="left:1px;top:321px" width="15" height="13"><use href="#folder"/></svg>
<div class="t" style="top:321.23px;font-size:13px;font-weight:bold;color:#000;letter-spacing:0.505px;left:18.80px;">[Music]</div>
<div class="t b" style="left:297px;top:321.23px;color:#000;letter-spacing:1.6px">&lt;DIR&gt;</div>
<div class="t b" style="left:0;width:590.43px;text-align:right;top:321.23px;color:#000;letter-spacing:0.93px">28.03.10</div>
<svg class="r" style="left:1px;top:337px" width="15" height="13"><use href="#folder"/></svg>
<div class="t" style="top:337.23px;font-size:13px;font-weight:bold;color:#000;letter-spacing:0.608px;left:18.80px;">[Pictures]</div>
<div class="t b" style="left:297px;top:337.23px;color:#000;letter-spacing:1.6px">&lt;DIR&gt;</div>
<div class="t b" style="left:0;width:590.43px;text-align:right;top:337.23px;color:#000;letter-spacing:0.93px">07.05.10</div>
<svg class="r" style="left:1px;top:353px" width="15" height="13"><use href="#folder"/></svg>
<div class="t" style="top:353.23px;font-size:13px;font-weight:bold;color:#000;letter-spacing:0.485px;left:18.80px;">[Podcasts]</div>
<div class="t b" style="left:297px;top:353.23px;color:#000;letter-spacing:1.6px">&lt;DIR&gt;</div>
<div class="t b" style="left:0;width:590.43px;text-align:right;top:353.23px;color:#000;letter-spacing:0.93px">31.03.10</div>
</div>
<svg class="r" style="left:1215px;top:200px" width="16" height="380"><path d="M6 11 L8.5 6 L11 11 Z" fill="#bdb39e"/><path d="M6 369 L8.5 374 L11 369 Z" fill="#6e6a64"/><rect x="0.5" y="16.5" width="15" height="347" rx="7.5" fill="url(#gTrough)"/><rect x="0.5" y="16.5" width="15" height="132" rx="7.5" fill="url(#gThumb)" stroke="#b5a88f"/><path d="M5 78.5 H11 M5 81.5 H11 M5 84.5 H11" stroke="#b9ad96" stroke-width="1"/></svg>
<div class="t" style="top:582.23px;font-size:13px;letter-spacing:-0.035px;left:622.00px;">Selected 0 of 156.3 M in 0 of 172 files</div>
<div class="t" style="top:125.23px;font-size:13px;left:510px;">*</div>
<div class="t" style="top:125.23px;font-size:13px;left:534px;">/</div>
<div class="t" style="top:125.23px;font-size:13px;left:555.5px;">..</div>
<div class="t" style="top:125.23px;font-size:13px;left:579px;">~</div>
<div class="t" style="top:125.23px;font-size:13px;left:602px;">&gt;</div>
<div class="t" style="top:125.23px;font-size:13px;left:1126px;">*</div>
<div class="t" style="top:125.23px;font-size:13px;left:1150px;">/</div>
<div class="t" style="top:125.23px;font-size:13px;left:1171.5px;">..</div>
<div class="t" style="top:125.23px;font-size:13px;left:1195px;">~</div>
<div class="t" style="top:125.23px;font-size:13px;left:1218px;">&lt;</div>
<div class="t" style="top:609.73px;font-size:13px;letter-spacing:0.410px;left:5.50px;">[/home/andrei/]$:</div>
<div class="r" style="left:2px;top:602px;width:1231px;height:1px;background:#fbfaf7;"></div>
<div class="r" style="left:2px;top:603px;width:1px;height:28px;background:#cdc8bf;"></div>
<div class="r" style="left:115px;top:606px;width:1117px;height:25px;background:#fff;border-top:1px solid #b9ab92;border-left:1px solid #b9ab92;box-sizing:border-box;border-radius:3px 0 0 0;"></div>
<div class="t" style="top:614.23px;font-size:13px;color:#2a2a2a;letter-spacing:-0.529px;left:121.50px;">mu</div>
<div class="r" style="left:1205px;top:606px;width:27px;height:26px;background:linear-gradient(#d3c9b9,#a89b86);border-radius:0 4px 4px 0;box-shadow:inset 0 0 0 1px #a2967f;"></div>
<svg class="r" style="left:1215px;top:617px" width="9" height="9"><path d="M0.5 1 H8.5 L4.5 8 Z" fill="#5f5b55"/></svg>
<div class="r" style="left:2px;top:631px;width:1231px;height:1px;background:#fdfcfa;"></div>
<div class="r" style="left:2px;top:632px;width:1231px;height:1px;background:#c8c4bc;"></div>
<div class="r" style="left:2px;top:637px;width:1231px;height:1px;background:#d9cdb8;"></div>
<div class="r" style="left:50px;top:638px;width:1px;height:59px;background:#fdfcfa;"></div>
<div class="r" style="left:51px;top:638px;width:1px;height:59px;background:#6f6f6f;"></div>
<div class="r" style="left:63px;top:638px;width:1154px;height:59px;background:#fff;"></div>
<svg class="r" style="left:1218px;top:637px" width="16" height="60"><path d="M4.5 12 L8 7 L11.5 12 Z" fill="#c9c0b0"/><path d="M4.5 49 L8 54 L11.5 49 Z" fill="#c9c0b0"/><rect x="1.5" y="17.5" width="13" height="27" rx="6.5" fill="url(#gThumb)" stroke="#b3a78f"/><path d="M5 28.5 H11 M5 31 H11 M5 33.5 H11" stroke="#b9b0a0" stroke-width="1"/></svg>
<div class="r" style="left:3px;top:697px;width:1230px;height:1px;background:#c2b8a8;"></div>
<div class="r" style="left:3px;top:698px;width:1230px;height:1px;background:#f8f6f2;"></div>
<div class="t" style="top:704.23px;font-size:13px;letter-spacing:0.084px;left:55.00px;">View F3</div>
<div class="t" style="top:704.23px;font-size:13px;letter-spacing:0.058px;left:210.00px;">Edit F4</div>
<div class="t" style="top:704.23px;font-size:13px;letter-spacing:-0.200px;left:362.00px;">Copy F5</div>
<div class="t" style="top:704.23px;font-size:13px;letter-spacing:0.043px;left:513.90px;">Move F6</div>
<div class="t" style="top:704.23px;font-size:13px;letter-spacing:-0.016px;left:659.60px;">MakeDir F7</div>
<div class="t" style="top:704.23px;font-size:13px;letter-spacing:0.046px;left:819.00px;">Delete F8</div>
<div class="t" style="top:704.23px;font-size:13px;letter-spacing:0.132px;left:967.80px;">Terminal F9</div>
<div class="t" style="top:704.23px;font-size:13px;letter-spacing:0.314px;left:1144.00px;">Exit</div>
<div class="r" style="left:2px;top:722px;width:1230px;height:1px;background:#fdfcfa;"></div>
<div class="r" style="left:2px;top:726px;width:1230px;height:1px;background:#f6f3ee;"></div></div></body></html>
